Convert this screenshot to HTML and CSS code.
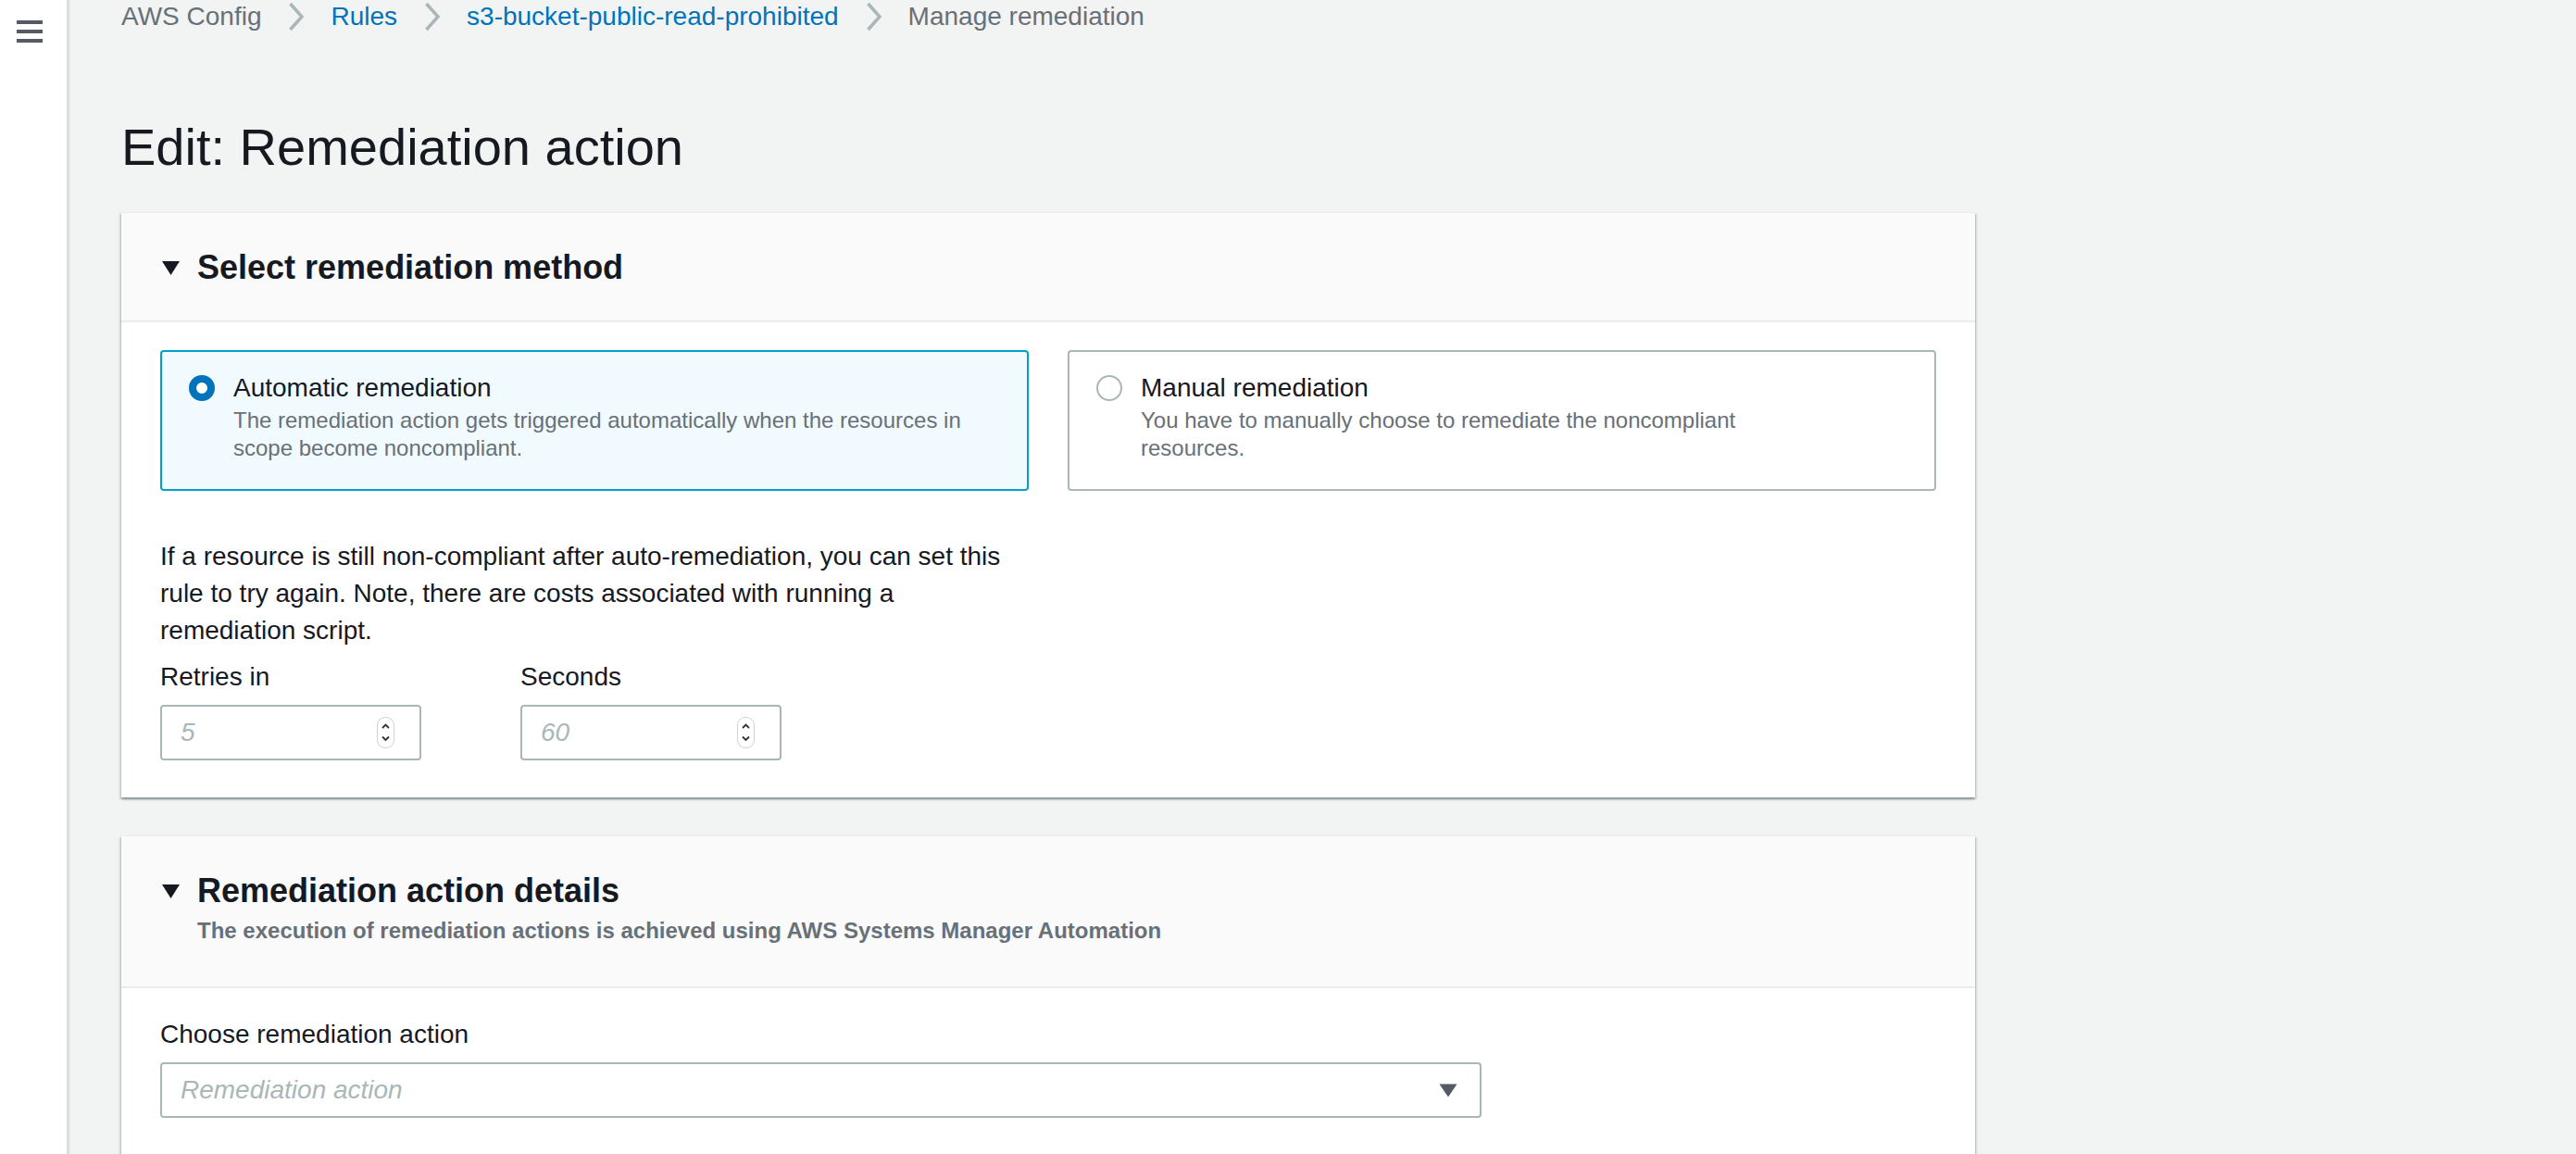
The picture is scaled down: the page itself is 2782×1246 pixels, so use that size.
FILE: index.html
```html
<!DOCTYPE html>
<html lang="en">
<head>
<meta charset="utf-8">
<title>Edit: Remediation action</title>
<link rel="stylesheet" href="styles.css">
</head>
<body>
<div class="app">
  <aside class="sidebar">
    <svg class="menu-icon" width="28" height="24" viewBox="0 0 28 24" aria-hidden="true">
      <rect x="0" y="0" width="28" height="4"/>
      <rect x="0" y="10" width="28" height="4"/>
      <rect x="0" y="20" width="28" height="4"/>
    </svg>
  </aside>
  <main class="main">
    <nav class="breadcrumbs">
      <span class="crumb crumb-muted">AWS Config</span>
      <svg class="crumb-sep" width="18" height="32" viewBox="0 0 18 32" aria-hidden="true"><polyline points="2.5,2 15,16 2.5,30"/></svg>
      <a class="crumb crumb-link">Rules</a>
      <svg class="crumb-sep" width="18" height="32" viewBox="0 0 18 32" aria-hidden="true"><polyline points="2.5,2 15,16 2.5,30"/></svg>
      <a class="crumb crumb-link">s3-bucket-public-read-prohibited</a>
      <svg class="crumb-sep" width="18" height="32" viewBox="0 0 18 32" aria-hidden="true"><polyline points="2.5,2 15,16 2.5,30"/></svg>
      <span class="crumb crumb-muted">Manage remediation</span>
    </nav>

    <h1 class="page-title">Edit: Remediation action</h1>

    <section class="panel">
      <header class="panel-header">
        <div class="panel-title">
          <svg class="expand-caret" width="19" height="15" viewBox="0 0 19 15" aria-hidden="true"><polygon points="0,0 19,0 9.5,15"/></svg>
          <h2>Select remediation method</h2>
        </div>
      </header>
      <div class="panel-body">
        <div class="tiles">
          <div class="tile tile-selected">
            <div class="radio-cell"><span class="radio radio-checked"></span></div>
            <div class="tile-text">
              <div class="tile-title">Automatic remediation</div>
              <div class="tile-desc">The remediation action gets triggered automatically when the resources in<br>scope become noncompliant.</div>
            </div>
          </div>
          <div class="tile">
            <div class="radio-cell"><span class="radio"></span></div>
            <div class="tile-text">
              <div class="tile-title">Manual remediation</div>
              <div class="tile-desc">You have to manually choose to remediate the noncompliant<br>resources.</div>
            </div>
          </div>
        </div>

        <p class="retry-note">If a resource is still non-compliant after auto-remediation, you can set this<br>rule to try again. Note, there are costs associated with running a<br>remediation script.</p>

        <div class="field-row">
          <div class="field">
            <div class="field-label">Retries in</div>
            <div class="control number-control">
              <span class="placeholder">5</span>
              <span class="spinner">
                <svg width="19" height="34" viewBox="0 0 19 34" aria-hidden="true"><polyline points="6,12 9.5,8.5 13,12"/><polyline points="6,21.5 9.5,25 13,21.5"/></svg>
              </span>
            </div>
          </div>
          <div class="field">
            <div class="field-label">Seconds</div>
            <div class="control number-control">
              <span class="placeholder">60</span>
              <span class="spinner">
                <svg width="19" height="34" viewBox="0 0 19 34" aria-hidden="true"><polyline points="6,12 9.5,8.5 13,12"/><polyline points="6,21.5 9.5,25 13,21.5"/></svg>
              </span>
            </div>
          </div>
        </div>
      </div>
    </section>

    <section class="panel">
      <header class="panel-header">
        <div class="panel-title">
          <svg class="expand-caret" width="19" height="15" viewBox="0 0 19 15" aria-hidden="true"><polygon points="0,0 19,0 9.5,15"/></svg>
          <h2>Remediation action details</h2>
        </div>
        <div class="panel-subtitle">The execution of remediation actions is achieved using AWS Systems Manager Automation</div>
      </header>
      <div class="panel-body panel-body-tall">
        <div class="field">
          <div class="field-label">Choose remediation action</div>
          <div class="control select-control">
            <span class="placeholder">Remediation action</span>
            <svg class="select-caret" width="20" height="15" viewBox="0 0 20 15" aria-hidden="true"><polygon points="0.5,0.5 19.5,0.5 10,14.5"/></svg>
          </div>
        </div>
      </div>
    </section>
  </main>
</div>
</body>
</html>
```

FILE: styles.css
```css
html, body {
  margin: 0;
  padding: 0;
  height: 100%;
  overflow: hidden;
}

body {
  background: #f2f3f3;
  font-family: "Liberation Sans", Arial, sans-serif;
  color: #16191f;
  font-size: 28px;
  line-height: 40px;
}

.app {
  display: flex;
  min-height: 100%;
}

.sidebar {
  flex: 0 0 74px;
  width: 74px;
  background: #ffffff;
  border-right: 2px solid #d9dede;
  box-shadow: 1px 0 2px rgba(0, 28, 36, 0.12);
  padding: 22px 0 0 18px;
  box-sizing: border-box;
}

.menu-icon {
  display: block;
  fill: #545b64;
}

.main {
  flex: 1;
  padding-left: 57px;
}

/* breadcrumbs */
.breadcrumbs {
  display: flex;
  align-items: center;
  margin-top: 2px;
  line-height: 32px;
  height: 32px;
}

.crumb {
  font-size: 28px;
  white-space: nowrap;
}

.crumb-muted {
  color: #687078;
}

.crumb-link {
  color: #0073bb;
}

.crumb-sep {
  margin: 0 28px 0 29px;
  fill: none;
  stroke: #aab7b8;
  stroke-width: 3.5;
  stroke-linejoin: miter;
}

.page-title {
  margin: 93px 0 38px 0;
  font-size: 56px;
  line-height: 64px;
  font-weight: 400;
  color: #16191f;
}

/* panels */
.panel {
  width: 2002px;
  background: #ffffff;
  border-top: 1px solid #eaeded;
  box-sizing: border-box;
  box-shadow: 0 2px 2px 0 rgba(0, 28, 36, 0.3), 2px 2px 2px 0 rgba(0, 28, 36, 0.12), -2px 2px 2px 0 rgba(0, 28, 36, 0.12);
  margin-bottom: 41px;
}

.panel-header {
  background: #fafafa;
  padding: 37px 41px 35px 42px;
  border-bottom: 2px solid #eaeded;
}

.panel-title {
  display: flex;
  align-items: center;
  gap: 19px;
  height: 44px;
}

.expand-caret {
  fill: #16191f;
  margin-left: 2px;
  flex: none;
}

.panel-title h2 {
  margin: 0;
  font-size: 36px;
  line-height: 44px;
  font-weight: 700;
  color: #16191f;
}

.panel-subtitle {
  margin: 5px 0 9px 40px;
  font-size: 24px;
  line-height: 32px;
  font-weight: 700;
  color: #687078;
}

.panel-body {
  padding: 30px 41px 40px 42px;
}

.panel-body-tall {
  padding-bottom: 200px;
}

/* tiles */
.tiles {
  display: grid;
  grid-template-columns: 938px 938px;
  column-gap: 42px;
}

.tile {
  display: flex;
  gap: 20px;
  padding: 19px 28px 29px 29px;
  border: 2px solid #aab7b8;
  border-radius: 4px;
  background: #ffffff;
}

.tile-selected {
  border-color: #00a1c9;
  background: #f1faff;
}

.radio-cell {
  height: 40px;
  display: flex;
  align-items: center;
  flex: none;
}

.radio {
  display: block;
  width: 28px;
  height: 28px;
  box-sizing: border-box;
  border-radius: 50%;
  border: 2px solid #aab7b8;
  background: #ffffff;
}

.radio-checked {
  border: 8px solid #0073bb;
}

.tile-title {
  font-size: 28px;
  line-height: 40px;
  color: #16191f;
}

.tile-desc {
  font-size: 24px;
  line-height: 30px;
  color: #687078;
  white-space: nowrap;
}

.retry-note {
  margin: 51px 0 10px 0;
  font-size: 28px;
  line-height: 40px;
  white-space: nowrap;
  color: #16191f;
}

/* fields */
.field-row {
  display: flex;
  gap: 107px;
}

.field-label {
  font-size: 28px;
  line-height: 40px;
  color: #16191f;
  margin-bottom: 10px;
}

.control {
  display: flex;
  align-items: center;
  box-sizing: border-box;
  height: 60px;
  border: 2px solid #aab7b8;
  border-radius: 4px;
  background: #ffffff;
  padding: 0 27px 0 20px;
}

.number-control {
  width: 282px;
}

.select-control {
  width: 1427px;
  padding-right: 24px;
}

.placeholder {
  flex: 1;
  font-style: italic;
  font-size: 28px;
  color: #aab7b8;
}

.spinner {
  display: block;
  width: 19px;
  height: 34px;
  box-sizing: border-box;
  border: 1px solid #cfd3d3;
  border-radius: 9px;
  background: #ffffff;
}

.spinner svg {
  display: block;
  margin: -1px 0 0 -1px;
  fill: none;
  stroke: #2f3336;
  stroke-width: 1.8;
}

.select-caret {
  fill: #545b64;
  flex: none;
}
```
